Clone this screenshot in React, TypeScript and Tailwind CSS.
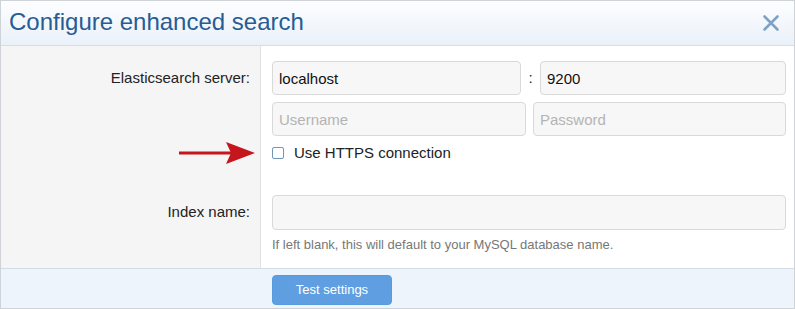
export default function App() {
  const font = { fontFamily: '"Liberation Sans", Arial, sans-serif' };

  return (
    <div style={font} className="w-[795px] h-[309px] flex flex-col border border-[#cfd3d8] bg-white text-[#222]">
      <div className="h-[45px] shrink-0 flex items-center justify-between pl-[8px] pr-[14px] border-b border-[#d6dde5] bg-gradient-to-b from-[#fdfeff] to-[#eaf1f9]">
        <h1 className="text-[24px] leading-none text-[#275c95] pb-[2px]">Configure enhanced search</h1>
        <svg width="18" height="18" viewBox="0 0 18 18" className="mb-[1px]">
          <path d="M2.5 2.5 L15.5 15.5 M15.5 2.5 L2.5 15.5" stroke="#7ea2c7" strokeWidth="2.6" strokeLinecap="round" />
        </svg>
      </div>

      <div className="flex-1 grid grid-cols-[260px_1fr] grid-rows-[auto_auto_auto_1fr]">
        {/* server row */}
        <div className="bg-[#f5f5f5] border-r border-[#e2e2e2] pt-[15px] pr-[10px] flex justify-end">
          <div className="h-[34px] flex items-center text-[15px]">Elasticsearch server:</div>
        </div>
        <div className="pt-[15px] pl-[11px] pr-[8px]">
          <div className="flex items-center gap-[6px]">
            <input
              defaultValue="localhost"
              className="w-[249px] h-[34px] rounded-[4px] border border-[#d9d9d9] bg-[#f7f7f7] px-[6px] text-[15px] text-[#111] outline-none"
            />
            <span className="w-[7px] text-[15px] text-center">:</span>
            <input
              defaultValue="9200"
              className="flex-1 h-[34px] rounded-[4px] border border-[#d9d9d9] bg-[#f7f7f7] px-[6px] text-[15px] text-[#111] outline-none"
            />
          </div>
          <div className="flex gap-[7px] pt-[7px]">
            <input
              placeholder="Username"
              className="w-[254px] h-[34px] rounded-[4px] border border-[#d9d9d9] bg-[#f7f7f7] px-[6px] text-[15px] outline-none placeholder:text-[#b4b4b4]"
            />
            <input
              placeholder="Password"
              className="flex-1 h-[34px] rounded-[4px] border border-[#d9d9d9] bg-[#f7f7f7] px-[6px] text-[15px] outline-none placeholder:text-[#b4b4b4]"
            />
          </div>
        </div>

        {/* https row */}
        <div className="bg-[#f5f5f5] border-r border-[#e2e2e2] pt-[7px] pr-[5px] flex justify-end">
          <svg width="76" height="24" viewBox="0 0 76 24" className="mt-[-2px]">
            <rect x="0" y="10.5" width="52" height="3" fill="#c4161c" />
            <path d="M47 1 L76 12 L47 23 L52 12 Z" fill="#c4161c" />
          </svg>
        </div>
        <div className="pt-[7px] pl-[11px] flex items-center h-[27px] gap-[10px]">
          <span className="w-[12px] h-[12px] border border-[#6f94bd] rounded-[2px] bg-white" />
          <span className="text-[15px]">Use HTTPS connection</span>
        </div>

        {/* index row */}
        <div className="bg-[#f5f5f5] border-r border-[#e2e2e2] pt-[30px] pr-[10px] flex justify-end">
          <div className="h-[35px] flex items-center text-[15px]">Index name:</div>
        </div>
        <div className="pt-[30px] pl-[11px] pr-[8px]">
          <input className="w-full h-[35px] rounded-[4px] border border-[#d9d9d9] bg-[#f7f7f7] px-[6px] text-[15px] outline-none" />
        </div>

        <div className="bg-[#f5f5f5] border-r border-[#e2e2e2]" />
        <div className="pt-[7px] pl-[11px] text-[13px] leading-[16px] text-[#777]">
          If left blank, this will default to your MySQL database name.
        </div>
      </div>

      <div className="h-[40px] shrink-0 border-t border-[#d3dbe4] bg-[#edf4fc] pl-[271px] pt-[6px]">
        <button className="w-[120px] h-[30px] rounded-[4px] bg-[#5f9fe1] border border-[#579ae0] text-white text-[13px]">
          Test settings
        </button>
      </div>
    </div>
  );
}
